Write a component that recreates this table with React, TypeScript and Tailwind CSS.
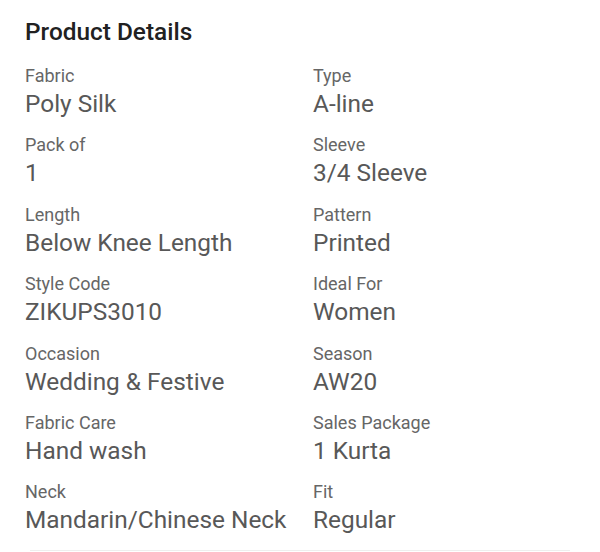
const details: [string, string][] = [
  ["Fabric", "Poly Silk"],
  ["Type", "A-line"],
  ["Pack of", "1"],
  ["Sleeve", "3/4 Sleeve"],
  ["Length", "Below Knee Length"],
  ["Pattern", "Printed"],
  ["Style Code", "ZIKUPS3010"],
  ["Ideal For", "Women"],
  ["Occasion", "Wedding & Festive"],
  ["Season", "AW20"],
  ["Fabric Care", "Hand wash"],
  ["Sales Package", "1 Kurta"],
  ["Neck", "Mandarin/Chinese Neck"],
  ["Fit", "Regular"],
];

export default function App() {
  return (
    <div className="w-[600px] h-[552px] bg-white font-['Roboto',sans-serif] overflow-hidden">
      <div className="px-[25px] pt-[17px]">
        <h2 className="text-[24.4px] leading-[30px] font-medium text-[#212121]">Product Details</h2>
        <div className="grid grid-cols-[288px_1fr] gap-y-[13.4px] mt-[17px]">
          {details.map(([label, value]) => (
            <div key={label}>
              <p className="text-[18px] leading-[24px] text-[#666666]">{label}</p>
              <p className="text-[24.4px] leading-[32px] text-[#585858]">{value}</p>
            </div>
          ))}
        </div>
      </div>
      <div className="mx-[30px] mt-[14px] border-t border-[#eeeeee]" />
    </div>
  );
}
